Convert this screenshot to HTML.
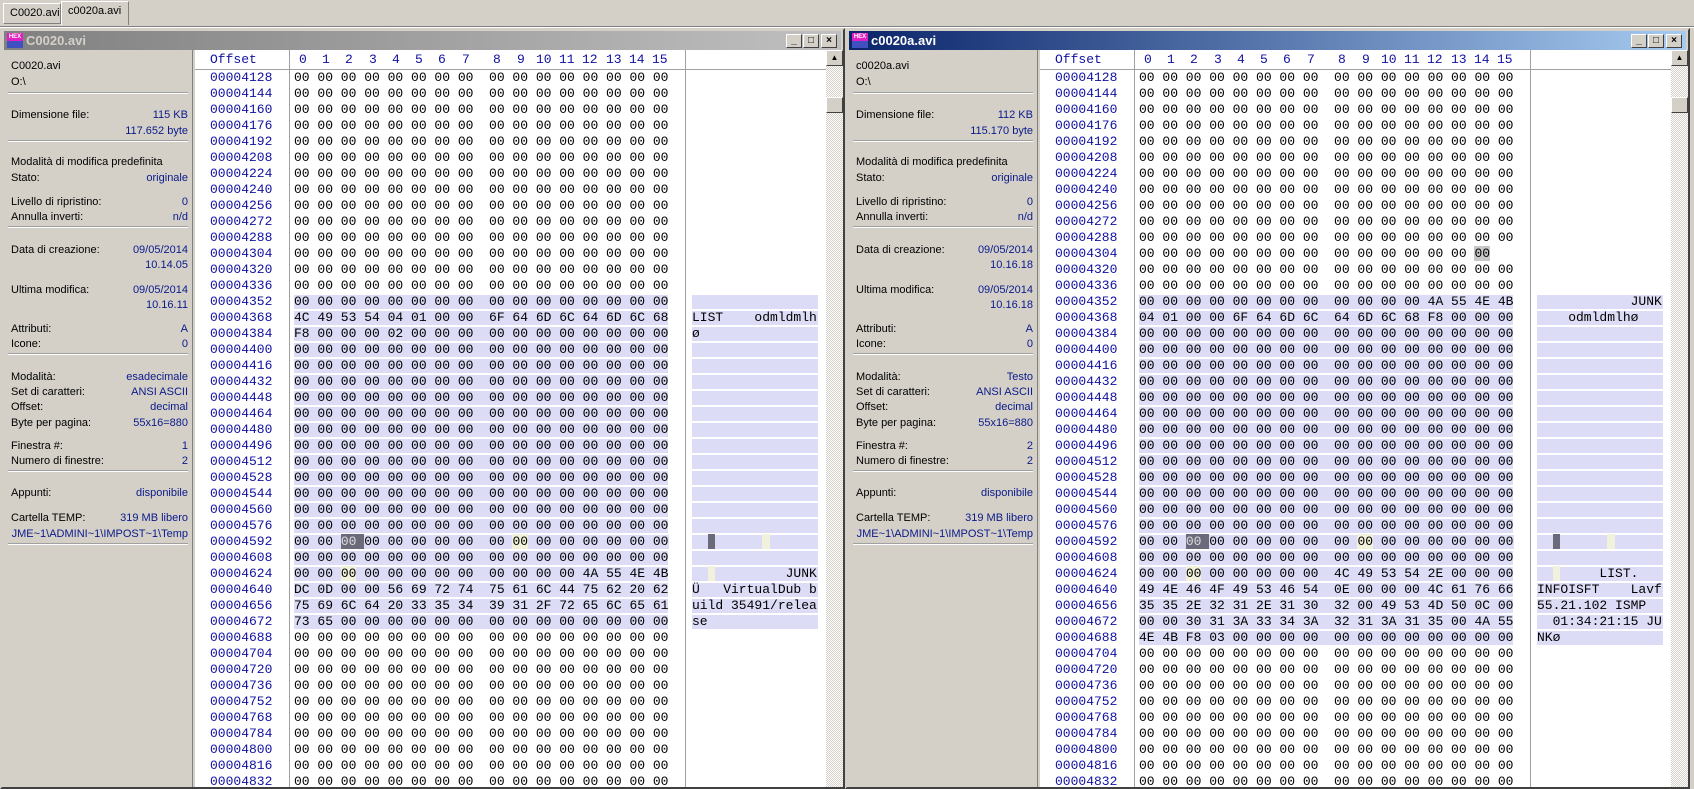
<!DOCTYPE html>
<html><head><meta charset="utf-8">
<style>
*{margin:0;padding:0;box-sizing:border-box}
body{width:1694px;height:789px;overflow:hidden;background:#d4d0c8;position:relative;font-family:"Liberation Sans",Arial,sans-serif;}
.tabs{position:absolute;left:0;top:0;width:1694px;height:27px;border-bottom:1px solid #808080;background:#d4d0c8}
.tabs:after{content:"";position:absolute;left:0;right:0;bottom:-2px;height:1px;background:#fff}
.tab{position:absolute;top:3px;height:21px;font-size:11px;line-height:19px;padding:0 6px;border:1px solid;border-color:#fff #808080 #808080 #fff;background:#d4d0c8;white-space:nowrap}
.win{position:absolute;top:28px;width:845px;height:761px;border:2px solid;border-color:#d4d0c8 #404040 #404040 #d4d0c8;background:#d4d0c8;overflow:hidden}
.title{position:absolute;left:2px;top:1px;right:2px;height:19px;color:#d4d0c8;font-weight:bold;font-size:13px;line-height:19px;padding-left:22px}
.w1 .title{background:linear-gradient(90deg,#808080,#c0c0c0)}
.w2 .title{background:linear-gradient(90deg,#0a246a,#a6caf0);color:#fff}
.ico{position:absolute;left:3px;top:2px;width:16px;height:15px;background:linear-gradient(#e020c0 0,#e020c0 55%,#4050c0 55%);font-size:6px;color:#fff;line-height:8px;text-align:center;font-weight:bold}
.btns{position:absolute;right:3px;top:3px;height:14px;width:52px}
.btn{position:absolute;top:0;width:16px;height:14px;background:#d4d0c8;border:1px solid;border-color:#fff #404040 #404040 #fff;font-size:10px;line-height:12px;text-align:center;color:#000;font-weight:bold}
.side{position:absolute;left:2px;top:20px;width:189px;bottom:0;background:#d4d0c8;font-size:11px;color:#000;border-right:1px solid #808080}
.side div{position:absolute;left:7px;right:4px;height:15px;line-height:15px;white-space:nowrap}
.side .v{text-align:right;color:#0a1a8a}
.side hr{position:absolute;left:4px;right:4px;height:2px;border:0;border-top:1px solid #a0a0a0;border-bottom:1px solid #fff}
.main{position:absolute;left:193px;top:20px;width:631px;bottom:0;background:#fff}
.hdr{position:absolute;left:0;top:0;width:631px;height:20px;border-bottom:1px solid #a0a0a0;font-family:"Liberation Mono",monospace;font-size:13px;color:#1010a0;line-height:19px}
.hdr span{position:absolute;top:0}
.vs{position:absolute;top:0;bottom:0;width:1px;background:#a0a0a0}
.col{position:absolute;top:20px;font-family:"Liberation Mono",monospace;font-size:13px;white-space:pre;color:#000}
.col div{height:16px;line-height:16px}
.off{left:15px;color:#1010a0}
.hx{left:99px}
.tx{left:497px}
.col i{font-style:normal;display:inline-block;background:#dcdcf6;line-height:14px;height:14px;vertical-align:top;margin-top:1px}
.tx i{width:126px}
.c{background:#6a6a7a;color:#ddd}
.y{background:#f2f2dc}
.g{background:#c8c8c8}
.sb{position:absolute;left:631px;top:20px;width:17px;bottom:0;background:repeating-conic-gradient(#fff 0 25%,#d4d0c8 0 50%) 0 0/2px 2px}
.sb .a{position:absolute;left:0;top:0;width:17px;height:16px;background:#d4d0c8;border:1px solid;border-color:#fff #404040 #404040 #fff;font-size:8px;line-height:14px;text-align:center}
.sb .t{position:absolute;left:0;top:47px;width:17px;height:16px;background:#d4d0c8;border:1px solid;border-color:#fff #404040 #404040 #fff}
</style></head><body>
<div class="tabs">
<div class="tab" style="left:3px;width:58px">C0020.avi</div>
<div class="tab" style="left:61px;top:1px;height:24px;width:68px;border-bottom:none">c0020a.avi</div>
</div>

<!-- LEFT WINDOW -->
<div class="win w1" style="left:0">
<div class="title"><div class="ico">HEX</div>C0020.avi
<div class="btns"><div class="btn" style="left:0">_</div><div class="btn" style="left:17px">□</div><div class="btn" style="left:35px">×</div></div></div>
<div class="side">
<div style="top:9px">C0020.avi</div>
<div style="top:25px">O:\</div>
<hr style="top:42px">
<div style="top:58px">Dimensione file:</div><div class="v" style="top:58px">115 KB</div>
<div class="v" style="top:74px">117.652 byte</div>
<hr style="top:90px">
<div style="top:105px">Modalità di modifica predefinita</div>
<div style="top:121px">Stato:</div><div class="v" style="top:121px">originale</div>
<div style="top:145px">Livello di ripristino:</div><div class="v" style="top:145px">0</div>
<div style="top:160px">Annulla inverti:</div><div class="v" style="top:160px">n/d</div>
<hr style="top:176px">
<div style="top:193px">Data di creazione:</div><div class="v" style="top:193px">09/05/2014</div>
<div class="v" style="top:208px">10.14.05</div>
<div style="top:233px">Ultima modifica:</div><div class="v" style="top:233px">09/05/2014</div>
<div class="v" style="top:248px">10.16.11</div>
<div style="top:272px">Attributi:</div><div class="v" style="top:272px">A</div>
<div style="top:287px">Icone:</div><div class="v" style="top:287px">0</div>
<hr style="top:303px">
<div style="top:320px">Modalità:</div><div class="v" style="top:320px">esadecimale</div>
<div style="top:335px">Set di caratteri:</div><div class="v" style="top:335px">ANSI ASCII</div>
<div style="top:350px">Offset:</div><div class="v" style="top:350px">decimal</div>
<div style="top:366px">Byte per pagina:</div><div class="v" style="top:366px">55x16=880</div>
<div style="top:389px">Finestra #:</div><div class="v" style="top:389px">1</div>
<div style="top:404px">Numero di finestre:</div><div class="v" style="top:404px">2</div>
<hr style="top:420px">
<div style="top:436px">Appunti:</div><div class="v" style="top:436px">disponibile</div>
<div style="top:461px">Cartella TEMP:</div><div class="v" style="top:461px">319 MB libero</div>
<div class="v" style="top:477px;left:0">JME~1\ADMINI~1\IMPOST~1\Temp</div>
<hr style="top:493px">
</div>
<div class="main">
<div class="hdr"><span style="left:15px">Offset</span><span style="left:104px">0</span><span style="left:127px">1</span><span style="left:150px">2</span><span style="left:174px">3</span><span style="left:197px">4</span><span style="left:220px">5</span><span style="left:243px">6</span><span style="left:267px">7</span><span style="left:298px">8</span><span style="left:322px">9</span><span style="left:341px">10</span><span style="left:364px">11</span><span style="left:387px">12</span><span style="left:411px">13</span><span style="left:434px">14</span><span style="left:457px">15</span></div>
<div class="vs" style="left:94px"></div><div class="vs" style="left:490px"></div>
<div class="col off"><div>00004128</div><div>00004144</div><div>00004160</div><div>00004176</div><div>00004192</div><div>00004208</div><div>00004224</div><div>00004240</div><div>00004256</div><div>00004272</div><div>00004288</div><div>00004304</div><div>00004320</div><div>00004336</div><div>00004352</div><div>00004368</div><div>00004384</div><div>00004400</div><div>00004416</div><div>00004432</div><div>00004448</div><div>00004464</div><div>00004480</div><div>00004496</div><div>00004512</div><div>00004528</div><div>00004544</div><div>00004560</div><div>00004576</div><div>00004592</div><div>00004608</div><div>00004624</div><div>00004640</div><div>00004656</div><div>00004672</div><div>00004688</div><div>00004704</div><div>00004720</div><div>00004736</div><div>00004752</div><div>00004768</div><div>00004784</div><div>00004800</div><div>00004816</div><div>00004832</div></div>
<div class="col hx"><div>00 00 00 00 00 00 00 00  00 00 00 00 00 00 00 00</div><div>00 00 00 00 00 00 00 00  00 00 00 00 00 00 00 00</div><div>00 00 00 00 00 00 00 00  00 00 00 00 00 00 00 00</div><div>00 00 00 00 00 00 00 00  00 00 00 00 00 00 00 00</div><div>00 00 00 00 00 00 00 00  00 00 00 00 00 00 00 00</div><div>00 00 00 00 00 00 00 00  00 00 00 00 00 00 00 00</div><div>00 00 00 00 00 00 00 00  00 00 00 00 00 00 00 00</div><div>00 00 00 00 00 00 00 00  00 00 00 00 00 00 00 00</div><div>00 00 00 00 00 00 00 00  00 00 00 00 00 00 00 00</div><div>00 00 00 00 00 00 00 00  00 00 00 00 00 00 00 00</div><div>00 00 00 00 00 00 00 00  00 00 00 00 00 00 00 00</div><div>00 00 00 00 00 00 00 00  00 00 00 00 00 00 00 00</div><div>00 00 00 00 00 00 00 00  00 00 00 00 00 00 00 00</div><div>00 00 00 00 00 00 00 00  00 00 00 00 00 00 00 00</div><div><i>00 00 00 00 00 00 00 00  00 00 00 00 00 00 00 00</i></div><div><i>4C 49 53 54 04 01 00 00  6F 64 6D 6C 64 6D 6C 68</i></div><div><i>F8 00 00 00 02 00 00 00  00 00 00 00 00 00 00 00</i></div><div><i>00 00 00 00 00 00 00 00  00 00 00 00 00 00 00 00</i></div><div><i>00 00 00 00 00 00 00 00  00 00 00 00 00 00 00 00</i></div><div><i>00 00 00 00 00 00 00 00  00 00 00 00 00 00 00 00</i></div><div><i>00 00 00 00 00 00 00 00  00 00 00 00 00 00 00 00</i></div><div><i>00 00 00 00 00 00 00 00  00 00 00 00 00 00 00 00</i></div><div><i>00 00 00 00 00 00 00 00  00 00 00 00 00 00 00 00</i></div><div><i>00 00 00 00 00 00 00 00  00 00 00 00 00 00 00 00</i></div><div><i>00 00 00 00 00 00 00 00  00 00 00 00 00 00 00 00</i></div><div><i>00 00 00 00 00 00 00 00  00 00 00 00 00 00 00 00</i></div><div><i>00 00 00 00 00 00 00 00  00 00 00 00 00 00 00 00</i></div><div><i>00 00 00 00 00 00 00 00  00 00 00 00 00 00 00 00</i></div><div><i>00 00 00 00 00 00 00 00  00 00 00 00 00 00 00 00</i></div><div><i>00 00 <span class="c">00 </span>00 00 00 00 00  00 <span class="y">00</span> 00 00 00 00 00 00</i></div><div><i>00 00 00 00 00 00 00 00  00 00 00 00 00 00 00 00</i></div><div><i>00 00 <span class="y">00</span> 00 00 00 00 00  00 00 00 00 4A 55 4E 4B</i></div><div><i>DC 0D 00 00 56 69 72 74  75 61 6C 44 75 62 20 62</i></div><div><i>75 69 6C 64 20 33 35 34  39 31 2F 72 65 6C 65 61</i></div><div><i>73 65 00 00 00 00 00 00  00 00 00 00 00 00 00 00</i></div><div>00 00 00 00 00 00 00 00  00 00 00 00 00 00 00 00</div><div>00 00 00 00 00 00 00 00  00 00 00 00 00 00 00 00</div><div>00 00 00 00 00 00 00 00  00 00 00 00 00 00 00 00</div><div>00 00 00 00 00 00 00 00  00 00 00 00 00 00 00 00</div><div>00 00 00 00 00 00 00 00  00 00 00 00 00 00 00 00</div><div>00 00 00 00 00 00 00 00  00 00 00 00 00 00 00 00</div><div>00 00 00 00 00 00 00 00  00 00 00 00 00 00 00 00</div><div>00 00 00 00 00 00 00 00  00 00 00 00 00 00 00 00</div><div>00 00 00 00 00 00 00 00  00 00 00 00 00 00 00 00</div><div>00 00 00 00 00 00 00 00  00 00 00 00 00 00 00 00</div></div>
<div class="col tx"><div></div><div></div><div></div><div></div><div></div><div></div><div></div><div></div><div></div><div></div><div></div><div></div><div></div><div></div><div><i></i></div><div><i>LIST    odmldmlh</i></div><div><i>ø</i></div><div><i></i></div><div><i></i></div><div><i></i></div><div><i></i></div><div><i></i></div><div><i></i></div><div><i></i></div><div><i></i></div><div><i></i></div><div><i></i></div><div><i></i></div><div><i></i></div><div><i>  <span class="c"> </span>      <span class="y"> </span></i></div><div><i></i></div><div><i>  <span class="y"> </span>         JUNK</i></div><div><i>Ü   VirtualDub b</i></div><div><i>uild 35491/relea</i></div><div><i>se</i></div></div>
</div>
<div class="sb" style="left:824px"><div class="a">▲</div><div class="t"></div></div>
</div>

<!-- RIGHT WINDOW -->
<div class="win w2" style="left:845px">
<div class="title"><div class="ico">HEX</div>c0020a.avi
<div class="btns"><div class="btn" style="left:0">_</div><div class="btn" style="left:17px">□</div><div class="btn" style="left:35px">×</div></div></div>
<div class="side">
<div style="top:9px">c0020a.avi</div>
<div style="top:25px">O:\</div>
<hr style="top:42px">
<div style="top:58px">Dimensione file:</div><div class="v" style="top:58px">112 KB</div>
<div class="v" style="top:74px">115.170 byte</div>
<hr style="top:90px">
<div style="top:105px">Modalità di modifica predefinita</div>
<div style="top:121px">Stato:</div><div class="v" style="top:121px">originale</div>
<div style="top:145px">Livello di ripristino:</div><div class="v" style="top:145px">0</div>
<div style="top:160px">Annulla inverti:</div><div class="v" style="top:160px">n/d</div>
<hr style="top:176px">
<div style="top:193px">Data di creazione:</div><div class="v" style="top:193px">09/05/2014</div>
<div class="v" style="top:208px">10.16.18</div>
<div style="top:233px">Ultima modifica:</div><div class="v" style="top:233px">09/05/2014</div>
<div class="v" style="top:248px">10.16.18</div>
<div style="top:272px">Attributi:</div><div class="v" style="top:272px">A</div>
<div style="top:287px">Icone:</div><div class="v" style="top:287px">0</div>
<hr style="top:303px">
<div style="top:320px">Modalità:</div><div class="v" style="top:320px">Testo</div>
<div style="top:335px">Set di caratteri:</div><div class="v" style="top:335px">ANSI ASCII</div>
<div style="top:350px">Offset:</div><div class="v" style="top:350px">decimal</div>
<div style="top:366px">Byte per pagina:</div><div class="v" style="top:366px">55x16=880</div>
<div style="top:389px">Finestra #:</div><div class="v" style="top:389px">2</div>
<div style="top:404px">Numero di finestre:</div><div class="v" style="top:404px">2</div>
<hr style="top:420px">
<div style="top:436px">Appunti:</div><div class="v" style="top:436px">disponibile</div>
<div style="top:461px">Cartella TEMP:</div><div class="v" style="top:461px">319 MB libero</div>
<div class="v" style="top:477px;left:0">JME~1\ADMINI~1\IMPOST~1\Temp</div>
<hr style="top:493px">
</div>
<div class="main">
<div class="hdr"><span style="left:15px">Offset</span><span style="left:104px">0</span><span style="left:127px">1</span><span style="left:150px">2</span><span style="left:174px">3</span><span style="left:197px">4</span><span style="left:220px">5</span><span style="left:243px">6</span><span style="left:267px">7</span><span style="left:298px">8</span><span style="left:322px">9</span><span style="left:341px">10</span><span style="left:364px">11</span><span style="left:387px">12</span><span style="left:411px">13</span><span style="left:434px">14</span><span style="left:457px">15</span></div>
<div class="vs" style="left:94px"></div><div class="vs" style="left:490px"></div>
<div class="col off"><div>00004128</div><div>00004144</div><div>00004160</div><div>00004176</div><div>00004192</div><div>00004208</div><div>00004224</div><div>00004240</div><div>00004256</div><div>00004272</div><div>00004288</div><div>00004304</div><div>00004320</div><div>00004336</div><div>00004352</div><div>00004368</div><div>00004384</div><div>00004400</div><div>00004416</div><div>00004432</div><div>00004448</div><div>00004464</div><div>00004480</div><div>00004496</div><div>00004512</div><div>00004528</div><div>00004544</div><div>00004560</div><div>00004576</div><div>00004592</div><div>00004608</div><div>00004624</div><div>00004640</div><div>00004656</div><div>00004672</div><div>00004688</div><div>00004704</div><div>00004720</div><div>00004736</div><div>00004752</div><div>00004768</div><div>00004784</div><div>00004800</div><div>00004816</div><div>00004832</div></div>
<div class="col hx"><div>00 00 00 00 00 00 00 00  00 00 00 00 00 00 00 00</div><div>00 00 00 00 00 00 00 00  00 00 00 00 00 00 00 00</div><div>00 00 00 00 00 00 00 00  00 00 00 00 00 00 00 00</div><div>00 00 00 00 00 00 00 00  00 00 00 00 00 00 00 00</div><div>00 00 00 00 00 00 00 00  00 00 00 00 00 00 00 00</div><div>00 00 00 00 00 00 00 00  00 00 00 00 00 00 00 00</div><div>00 00 00 00 00 00 00 00  00 00 00 00 00 00 00 00</div><div>00 00 00 00 00 00 00 00  00 00 00 00 00 00 00 00</div><div>00 00 00 00 00 00 00 00  00 00 00 00 00 00 00 00</div><div>00 00 00 00 00 00 00 00  00 00 00 00 00 00 00 00</div><div>00 00 00 00 00 00 00 00  00 00 00 00 00 00 00 00</div><div>00 00 00 00 00 00 00 00  00 00 00 00 00 00 <span class="g">00</span></div><div>00 00 00 00 00 00 00 00  00 00 00 00 00 00 00 00</div><div>00 00 00 00 00 00 00 00  00 00 00 00 00 00 00 00</div><div><i>00 00 00 00 00 00 00 00  00 00 00 00 4A 55 4E 4B</i></div><div><i>04 01 00 00 6F 64 6D 6C  64 6D 6C 68 F8 00 00 00</i></div><div><i>00 00 00 00 00 00 00 00  00 00 00 00 00 00 00 00</i></div><div><i>00 00 00 00 00 00 00 00  00 00 00 00 00 00 00 00</i></div><div><i>00 00 00 00 00 00 00 00  00 00 00 00 00 00 00 00</i></div><div><i>00 00 00 00 00 00 00 00  00 00 00 00 00 00 00 00</i></div><div><i>00 00 00 00 00 00 00 00  00 00 00 00 00 00 00 00</i></div><div><i>00 00 00 00 00 00 00 00  00 00 00 00 00 00 00 00</i></div><div><i>00 00 00 00 00 00 00 00  00 00 00 00 00 00 00 00</i></div><div><i>00 00 00 00 00 00 00 00  00 00 00 00 00 00 00 00</i></div><div><i>00 00 00 00 00 00 00 00  00 00 00 00 00 00 00 00</i></div><div><i>00 00 00 00 00 00 00 00  00 00 00 00 00 00 00 00</i></div><div><i>00 00 00 00 00 00 00 00  00 00 00 00 00 00 00 00</i></div><div><i>00 00 00 00 00 00 00 00  00 00 00 00 00 00 00 00</i></div><div><i>00 00 00 00 00 00 00 00  00 00 00 00 00 00 00 00</i></div><div><i>00 00 <span class="c">00 </span>00 00 00 00 00  00 <span class="y">00</span> 00 00 00 00 00 00</i></div><div><i>00 00 00 00 00 00 00 00  00 00 00 00 00 00 00 00</i></div><div><i>00 00 <span class="y">00</span> 00 00 00 00 00  4C 49 53 54 2E 00 00 00</i></div><div><i>49 4E 46 4F 49 53 46 54  0E 00 00 00 4C 61 76 66</i></div><div><i>35 35 2E 32 31 2E 31 30  32 00 49 53 4D 50 0C 00</i></div><div><i>00 00 30 31 3A 33 34 3A  32 31 3A 31 35 00 4A 55</i></div><div><i>4E 4B F8 03 00 00 00 00  00 00 00 00 00 00 00 00</i></div><div>00 00 00 00 00 00 00 00  00 00 00 00 00 00 00 00</div><div>00 00 00 00 00 00 00 00  00 00 00 00 00 00 00 00</div><div>00 00 00 00 00 00 00 00  00 00 00 00 00 00 00 00</div><div>00 00 00 00 00 00 00 00  00 00 00 00 00 00 00 00</div><div>00 00 00 00 00 00 00 00  00 00 00 00 00 00 00 00</div><div>00 00 00 00 00 00 00 00  00 00 00 00 00 00 00 00</div><div>00 00 00 00 00 00 00 00  00 00 00 00 00 00 00 00</div><div>00 00 00 00 00 00 00 00  00 00 00 00 00 00 00 00</div><div>00 00 00 00 00 00 00 00  00 00 00 00 00 00 00 00</div></div>
<div class="col tx"><div></div><div></div><div></div><div></div><div></div><div></div><div></div><div></div><div></div><div></div><div></div><div></div><div></div><div></div><div><i>            JUNK</i></div><div><i>    odmldmlhø</i></div><div><i></i></div><div><i></i></div><div><i></i></div><div><i></i></div><div><i></i></div><div><i></i></div><div><i></i></div><div><i></i></div><div><i></i></div><div><i></i></div><div><i></i></div><div><i></i></div><div><i></i></div><div><i>  <span class="c"> </span>      <span class="y"> </span></i></div><div><i></i></div><div><i>  <span class="y"> </span>     LIST.</i></div><div><i>INFOISFT    Lavf</i></div><div><i>55.21.102 ISMP</i></div><div><i>  01:34:21:15 JU</i></div><div><i>NKø</i></div></div>
</div>
<div class="sb" style="left:824px"><div class="a">▲</div><div class="t"></div></div>
</div>
</body></html>
